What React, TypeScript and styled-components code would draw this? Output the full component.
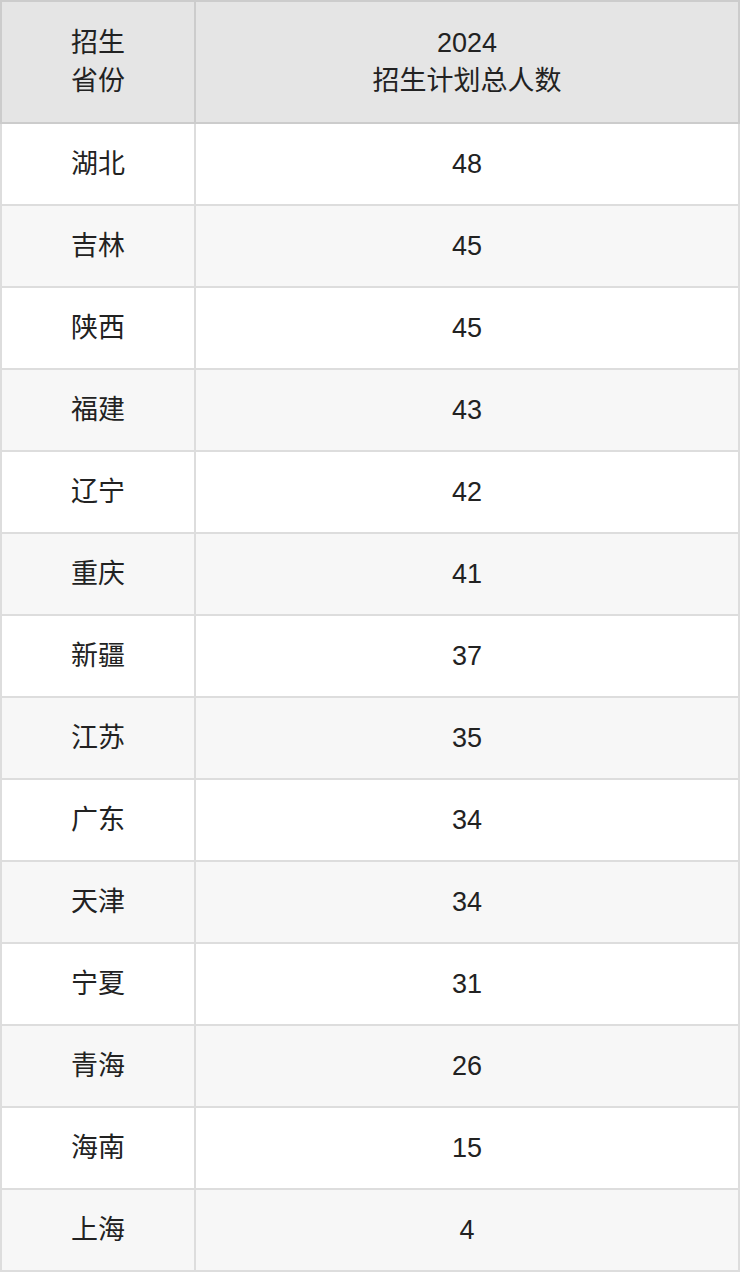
import React from "react";
import styled, { createGlobalStyle } from "styled-components";

const GlobalStyle = createGlobalStyle`
  html, body { margin: 0; padding: 0; background: #ffffff; }
  body {
    font-family: "Liberation Sans", Arial, "Noto Sans CJK SC", sans-serif;
    color: #222222;
  }
`;

const Table = styled.table`
  width: 740px;
  border-collapse: separate;
  border-spacing: 0;
  table-layout: fixed;
  font-size: 27px;
  line-height: 38px;
  text-align: center;
`;

const HeadCell = styled.th<{ $first?: boolean }>`
  height: 120px;
  padding: 0;
  font-weight: 400;
  background: #e5e5e5;
  border-top: 2px solid #cccccc;
  border-bottom: 2px solid #cccccc;
  border-right: 2px solid #cccccc;
  border-left: ${(p) => (p.$first ? "2px solid #cccccc" : "none")};
  width: ${(p) => (p.$first ? "192px" : "auto")};
  vertical-align: middle;
`;

const Row = styled.tr<{ $alt: boolean }>`
  background: ${(p) => (p.$alt ? "#f7f7f7" : "#ffffff")};
`;

const Cell = styled.td<{ $first?: boolean }>`
  height: 80px;
  padding: 0;
  border-bottom: 2px solid #dddddd;
  border-right: 2px solid #dddddd;
  border-left: ${(p) => (p.$first ? "2px solid #dddddd" : "none")};
  vertical-align: middle;
`;

const data: [string, number][] = [
  ["湖北", 48],
  ["吉林", 45],
  ["陕西", 45],
  ["福建", 43],
  ["辽宁", 42],
  ["重庆", 41],
  ["新疆", 37],
  ["江苏", 35],
  ["广东", 34],
  ["天津", 34],
  ["宁夏", 31],
  ["青海", 26],
  ["海南", 15],
  ["上海", 4],
];

export default function App() {
  return (
    <>
      <GlobalStyle />
      <Table>
        <thead>
          <tr>
            <HeadCell $first>
              招生
              <br />
              省份
            </HeadCell>
            <HeadCell>
              2024
              <br />
              招生计划总人数
            </HeadCell>
          </tr>
        </thead>
        <tbody>
          {data.map(([name, n], i) => (
            <Row key={name} $alt={i % 2 === 1}>
              <Cell $first>{name}</Cell>
              <Cell>{n}</Cell>
            </Row>
          ))}
        </tbody>
      </Table>
    </>
  );
}
